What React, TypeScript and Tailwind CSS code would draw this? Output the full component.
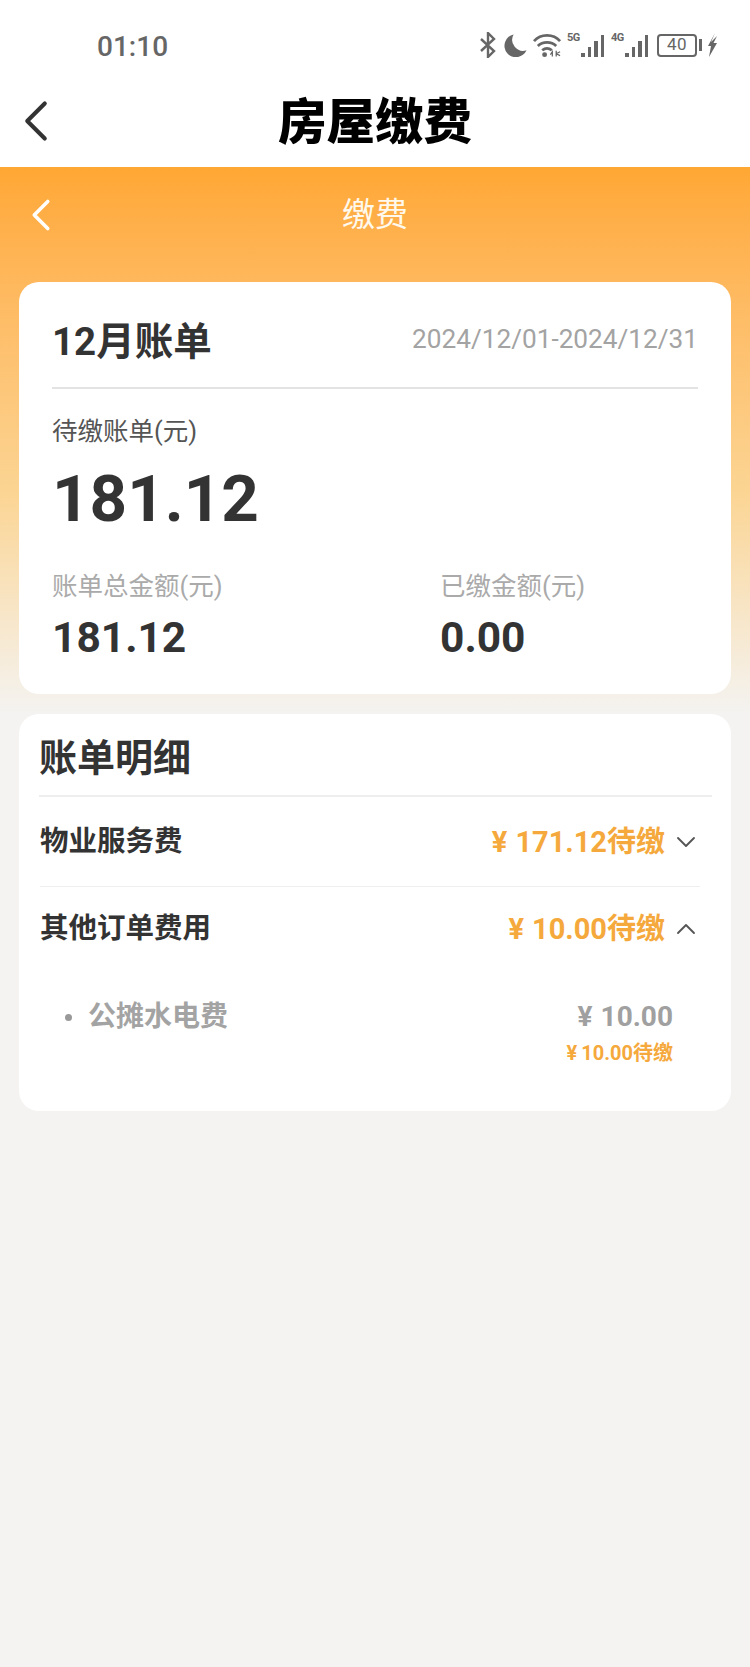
import { ChevronDown, ChevronLeft, ChevronUp } from "lucide-react";

const font = "font-['Roboto','Noto_Sans_CJK_SC',sans-serif]";

function Signal({ label }: { label: string }) {
  return (
    <div className="relative flex h-[23px] w-[37px] items-end justify-end gap-[3px]">
      <span className="absolute left-0 top-[-2px] text-[11px] font-bold leading-[12px] tracking-[-0.5px] text-[#666]">{label}</span>
      <i className="h-[4px] w-[3.500px] bg-[#666]" />
      <i className="h-[10px] w-[3.500px] bg-[#666]" />
      <i className="h-[16px] w-[3.500px] bg-[#666]" />
      <i className="h-[22px] w-[3.500px] bg-[#666]" />
    </div>
  );
}

function StatusBar() {
  return (
    <div className="flex h-[80px] items-start justify-between pl-[97px] pr-[32px] pt-[30px]">
      <span className="text-[28px] font-medium leading-[34px] text-[#666]">01:10</span>
      <div className="flex items-center pt-[2px]">
        <svg width="17" height="26" viewBox="0 0 17 26" fill="none" stroke="#666" strokeWidth="2.400" className="mr-[8px]">
          <path d="M2 7l13 12-6 6V1l6 6L2 19" />
        </svg>
        <svg width="23" height="24" viewBox="0 0 24 24" fill="#666" className="mr-[6px]">
          <path d="M10 1a12 12 0 1 0 13.500 16.500A11.500 11.500 0 0 1 10 1z" />
        </svg>
        <svg width="29" height="26" viewBox="0 0 30 26" fill="none" stroke="#666" strokeWidth="2.800" className="mr-[5px]">
          <path d="M1 9c7-8 20-8 27 0M5 14c5-5 14-5 19 0M9.500 18.500c3-2.500 7-2.500 10 0" />
          <circle cx="12" cy="23" r="2.500" fill="#666" stroke="none" />
          <path d="M18 23l2-3v5M24 19v6M24 22l4-2M24 22l4 2" strokeWidth="1.300" />
        </svg>
        <Signal label="5G" />
        <div className="ml-[7px]">
          <Signal label="4G" />
        </div>
        <div className="ml-[9px] flex h-[23px] w-[40px] items-center justify-center rounded-[4px] border-2 border-[#666] text-[17px] font-normal tracking-[0.5px] text-[#666]">
          40
        </div>
        <i className="ml-[2px] h-[12px] w-[3px] bg-[#666]" />
        <svg width="11" height="24" viewBox="0 0 11 24" fill="#666" className="ml-[5px]">
          <path d="M8 0L1 13h3l-2 11 8-14H6.500L10 3 4 9z" />
        </svg>
      </div>
    </div>
  );
}

function DetailRow({
  label,
  amount,
  open,
}: {
  label: string;
  amount: string;
  open?: boolean;
}) {
  return (
    <div className="flex items-center justify-between">
      <span className="text-[28.500px] font-bold leading-[40px] text-[#333]">{label}</span>
      <div className="flex items-center">
        <span className="text-[29px] font-bold leading-[40px] text-[#f5a93c]">
          <span className="mr-[8px]">¥</span>
          {amount}
        </span>
        {open ? (
          <ChevronUp size={32} strokeWidth={1.400} className="-mr-[2px] ml-[5px] text-[#555]" />
        ) : (
          <ChevronDown size={32} strokeWidth={1.400} className="-mr-[2px] ml-[5px] text-[#555]" />
        )}
      </div>
    </div>
  );
}

export default function App() {
  return (
    <div className={`${font} min-h-[1667px] bg-[#f4f3f1]`}>
      <div className="bg-white">
        <StatusBar />
        <div className="relative flex h-[87px] items-center justify-center pb-[2px]">
          <ChevronLeft size={70} strokeWidth={1.400} className="absolute left-[1px] top-[6px] text-[#333]" />
          <span className="text-[48.500px] font-black leading-[60px] text-black">房屋缴费</span>
        </div>
      </div>

      <div className="bg-gradient-to-b from-[#ffa733] via-[#fbd594] via-60% to-[#f4f3f1] px-[19px] pb-[20px]">
        <div className="relative flex h-[115px] items-start justify-center pt-[26px]">
          <ChevronLeft size={54} strokeWidth={1.600} className="absolute left-[-5px] top-[21px] text-white" />
          <span className="text-[33px] leading-[44px] text-[#fff8ec]">缴费</span>
        </div>

        <div className="h-[412px] rounded-[20px] bg-white px-[33px] pt-[36px]">
          <div className="flex h-[71px] items-start justify-between border-b-2 border-[#e3e3e3]">
            <span className="text-[38.500px] font-bold leading-[48px] text-[#333]">12月账单</span>
            <span className="pt-[3px] text-[26.200px] leading-[36px] text-[#a3a3a3]">2024/12/01-2024/12/31</span>
          </div>
          <div className="pt-[25px] text-[25.500px] leading-[34px] text-[#555]">待缴账单(元)</div>
          <div className="pt-[11px] text-[65.500px] font-bold leading-[80px] text-[#333]">181.12</div>
          <div className="flex pt-[31px]">
            <div className="w-[388px]">
              <div className="text-[25.500px] leading-[32px] text-[#aaa]">账单总金额(元)</div>
              <div className="pt-[10px] text-[42.500px] font-bold leading-[52px] text-[#333]">181.12</div>
            </div>
            <div>
              <div className="text-[25.500px] leading-[32px] text-[#aaa]">已缴金额(元)</div>
              <div className="pt-[10px] text-[42.500px] font-bold leading-[52px] text-[#333]">0.00</div>
            </div>
          </div>
        </div>
      </div>

      <div className="mx-[19px] h-[397px] rounded-[20px] bg-white pl-[20px] pr-[19px]">
        <div className="flex h-[83px] items-center border-b-2 border-[#eeeeee] pt-[6px] text-[38px] font-bold leading-[50px] text-[#333]">
          账单明细
        </div>
        <div className="pl-[1px] pr-[12px]">
          <div className="flex h-[90px] flex-col justify-center border-b border-[#efefef]">
            <DetailRow label="物业服务费" amount="171.12待缴" />
          </div>
          <div className="flex h-[84px] flex-col justify-center">
            <DetailRow label="其他订单费用" amount="10.00待缴" open />
          </div>
          <div className="flex items-start justify-between pl-[25px] pr-[27px] pt-[26px]">
            <div className="flex items-center">
              <i className="h-[7px] w-[7px] rounded-full bg-[#999]" />
              <span className="ml-[16px] text-[28px] font-bold leading-[40px] text-[#a3a3a3]">公摊水电费</span>
            </div>
            <div className="flex flex-col items-end">
              <span className="text-[28px] font-bold leading-[40px] text-[#a0a0a0]">
                <span className="mr-[8px]">¥</span>
                10.00
              </span>
              <span className="pt-[1px] text-[20px] font-bold leading-[30px] text-[#f5a93c]">
                <span className="mr-[4px]">¥</span>
                10.00待缴
              </span>
            </div>
          </div>
        </div>
      </div>
    </div>
  );
}
